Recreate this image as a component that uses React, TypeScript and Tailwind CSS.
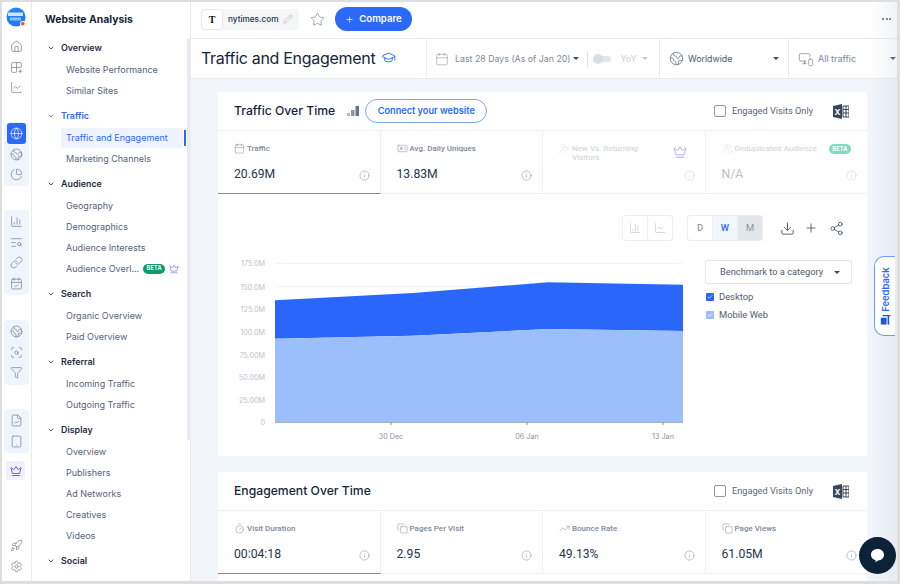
import React from "react";
import {
  House, Grid2x2Plus, ChartLine, Globe, Earth, ChartPie, ChartColumn, TextSearch, Link, CalendarCheck,
  ScanSearch, Funnel, FileChartLine, Tablet, Crown, Rocket, Settings, ChevronDown, Pencil, Star, Plus,
  GraduationCap, Calendar, Info, Share2, Users, UserPlus, Timer, Copy, TrendingUp, IdCard, Check, MonitorSmartphone,
  Download,
} from "lucide-react";

const F = "font-['Inter','Liberation_Sans',sans-serif]";
const R = "font-['Roboto','Liberation_Sans',sans-serif]";

function Rail({ children, className = "" }: { children: React.ReactNode; className?: string }) {
  return <div className={`mx-[2px] flex flex-col items-center rounded-[4px] bg-[#eff4fd] ${className}`}>{children}</div>;
}

function RailIcon({ I, active }: { I: React.ComponentType<any>; active?: boolean }) {
  return (
    <div className={`flex h-[20.7px] w-[19px] shrink-0 items-center justify-center rounded-[3px] ${active ? "bg-[#2b69fa] text-white" : "text-[#737e8e]"}`}>
      <I size={13} strokeWidth={1.3} />
    </div>
  );
}

function NavHead({ label, active }: { label: string; active?: boolean }) {
  return (
    <div className={`mt-1 flex h-[21px] items-center pl-[15px] text-[8.9px] font-semibold ${active ? "text-[#2b69fa]" : "text-[#1f2c40]"}`}>
      <ChevronDown size={8} strokeWidth={2.4} className="mr-[6px]" />
      {label}
    </div>
  );
}

function NavItem({ label, active, children }: { label: string; active?: boolean; children?: React.ReactNode }) {
  return (
    <div className={`flex h-[21px] items-center pl-[34px] text-[9px] ${active ? "text-[#2b69fa]" : "text-[#56637a]"}`}>
      {active ? (
        <div className="ml-[-5px] flex h-[20px] w-[122px] items-center rounded-[2px] bg-[#eef3fd] pl-[5px]">{label}</div>
      ) : (
        label
      )}
      {active && <div className="ml-[1px] h-[16px] w-[2px] bg-[#2b69fa]" />}
      {children}
    </div>
  );
}

function Section({ head, items, active }: { head: string; items: string[]; active?: string }) {
  return (
    <div>
      <NavHead label={head} active={!!active} />
      <div className="mt-[1px]">
        {items.map((i) => (
          <NavItem key={i} label={i} active={i === active} />
        ))}
      </div>
    </div>
  );
}

function Excel() {
  return (
    <svg width="16" height="15" viewBox="0 0 16 15" className="shrink-0">
      <path d="M0 2 9 0v15l-9-2z" fill="#38465a" />
      <path d="M10 2h6v11h-6z" fill="none" stroke="#38465a" strokeWidth="1" />
      <path d="M10 5.500h6M10 9h6M13 2v11" stroke="#38465a" strokeWidth="1" />
      <text x="4.400" y="10.600" fontSize="8" fontWeight="700" fill="#fff" textAnchor="middle" fontFamily="Inter">X</text>
    </svg>
  );
}

function Engaged() {
  return (
    <div className={`${R} flex items-center text-[9.2px] text-[#59657a]`}>
      <div className="mr-[6px] h-[12px] w-[12px] rounded-[2px] border border-[#8d97a6]" />
      Engaged Visits Only
      <div className="ml-[20px] mr-[18px]"><Excel /></div>
    </div>
  );
}

type TileProps = { I: React.ComponentType<any>; label: string; value?: string; active?: boolean; muted?: boolean; extra?: React.ReactNode; last?: boolean };

function Tile({ I, label, value, active, muted, extra, last }: TileProps) {
  return (
    <div className={`relative h-[63px] min-w-0 flex-1 pl-[16px] pt-[13px] ${last ? "" : "border-r border-[#eceff3]"} ${active ? "border-b-[1px] border-b-[#5f8ff0]" : ""}`}>
      <div className={`${R} flex items-start text-[8px] font-medium leading-[9.4px] ${muted ? "text-[#d5d9e0]" : "text-[#7e8898]"}`}>
        <I size={11} strokeWidth={1.1} className="mr-[2px] mt-[-1px] shrink-0" />
        <span className="whitespace-pre-line">{label}</span>
      </div>
      {value && (
        <div className={`${R} absolute left-[16px] top-[35px] text-[12.2px] leading-[16px] ${muted ? "text-[#b9bfc9]" : "text-[#27354a]"}`}>{value}</div>
      )}
      <Info size={11} strokeWidth={1.2} className={`absolute right-[10px] top-[38.500px] ${muted ? "text-[#ccd1d8]" : "text-[#8c95a3]"}`} />
      {extra}
    </div>
  );
}

function Pill({ faded }: { faded?: boolean }) {
  return (
    <span className={`inline-flex h-[10px] w-[22px] items-center justify-center rounded-full text-[5.5px] font-bold tracking-[0.3px] text-white ${faded ? "bg-[#7fdcc0]" : "bg-[#0d9d6d]"}`}>BETA</span>
  );
}

function Chart() {
  const ys: [string, number][] = [["175.0M", 263.5], ["150.0M", 287], ["125.0M", 309.5], ["100.0M", 332], ["75.00M", 355], ["50.00M", 377], ["25.00M", 400], ["0", 422.5]];
  const xs: [string, number][] = [["30 Dec", 391], ["06 Jan", 527], ["13 Jan", 663]];
  return (
    <svg width="470" height="190" viewBox="218 255 470 190" className="shrink-0" fontFamily="Inter">
      <path d="M275 263.300H683M275 286.700H683" stroke="#f1f3f6" strokeWidth="1" />
      <path d="M275 300.200 413 293 548 282.300 683 284.700V331L548 329 413 335.700 275 338.800Z" fill="#2b66fb" />
      <path d="M275 338.800 413 335.700 548 329 683 331V422.500H275Z" fill="#9cbefb" />
      <path d="M275 422.500H683" stroke="#a9b1bb" strokeWidth="1" />
      {xs.map(([t, x]) => (
        <g key={t}>
          <path d={`M${x} 422.500v2.500`} stroke="#7e8794" strokeWidth="1" />
          <text x={x} y="439" textAnchor="middle" fontSize="7.200" fill="#8b94a2">{t}</text>
        </g>
      ))}
      {ys.map(([t, y]) => (
        <text key={t} x="265" y={y + 2.7} textAnchor="end" fontSize="7.200" fill="#bcc3cd">{t}</text>
      ))}
    </svg>
  );
}

function Legend({ label, light }: { label: string; light?: boolean }) {
  return (
    <div className={`${R} flex h-[18px] items-center text-[9.4px] text-[#4f5c70]`}>
      <div className={`mr-[5px] flex h-[8px] w-[8px] items-center justify-center rounded-[1px] ${light ? "bg-[#9cbefb]" : "bg-[#2b66fb]"}`}>
        <Check size={6} strokeWidth={3} className="text-white" />
      </div>
      {label}
    </div>
  );
}

export default function App() {
  return (
    <div className={`${F} h-[584px] w-[900px] overflow-hidden bg-[#dedede] pb-[3px] pl-[2px] pr-[3px] pt-[2px]`}>
      <div className="relative flex h-[579px] w-[895px] overflow-hidden bg-white">
        {/* rail */}
        <div className="flex h-full w-[30px] shrink-0 flex-col border-r border-[#e8ebf0] pt-[5px]">
          <div className="ml-[4px] h-[19px] w-[19px]">
            <svg width="20" height="20" viewBox="0 0 20 20">
              <defs>
                <linearGradient id="lg" x1="0" y1="0" x2="1" y2="1"><stop offset="0" stopColor="#1f8ef1" /><stop offset="1" stopColor="#2b69fa" /></linearGradient>
              </defs>
              <circle cx="10" cy="10" r="9.500" fill="url(#lg)" />
              <rect x="2" y="5.500" width="15" height="3.500" fill="#cfe3fb" />
              <rect x="4" y="10.500" width="11" height="3" fill="#8ec0f7" />
              <circle cx="16.700" cy="16.700" r="2.400" fill="#e8622c" stroke="#fff" strokeWidth="1" />
            </svg>
          </div>
          <div className="mt-[10px] flex flex-col items-center">
            <RailIcon I={House} />
            <RailIcon I={Grid2x2Plus} />
            <RailIcon I={ChartLine} />
          </div>
          <Rail className="mt-[24px] h-[64px] pt-[1px]">
            <RailIcon I={Globe} active />
            <RailIcon I={Earth} />
            <RailIcon I={ChartPie} />
          </Rail>
          <Rail className="mt-[24px] h-[85px] pt-[1px]">
            <RailIcon I={ChartColumn} />
            <RailIcon I={TextSearch} />
            <RailIcon I={Link} />
            <RailIcon I={CalendarCheck} />
          </Rail>
          <Rail className="mt-[25px] h-[65px] pt-[1px]">
            <RailIcon I={Earth} />
            <RailIcon I={ScanSearch} />
            <RailIcon I={Funnel} />
          </Rail>
          <Rail className="mt-[24px] h-[44px] pt-[1px]">
            <RailIcon I={FileChartLine} />
            <RailIcon I={Tablet} />
          </Rail>
          <div className="ml-[4px] mt-[8px] flex h-[19px] w-[19px] items-center justify-center rounded-[3px] bg-[#f1effe] text-[#4a3fd0]">
            <Crown size={12} strokeWidth={1.6} />
          </div>
          <div className="mt-auto flex flex-col items-center pb-[4px]">
            <RailIcon I={Rocket} />
            <RailIcon I={Settings} />
          </div>
        </div>

        {/* nav */}
        <div className="relative h-full w-[159px] shrink-0 border-r border-[#e8ebf0]">
          <div className="flex h-[33px] items-center pl-[13px] pt-[2px] text-[10.4px] font-bold text-[#17243a]">Website Analysis</div>
          <div className="mt-[-2px]">
            <Section head="Overview" items={["Website Performance", "Similar Sites"]} />
            <Section head="Traffic" items={["Traffic and Engagement", "Marketing Channels"]} active="Traffic and Engagement" />
            <div>
              <NavHead label="Audience" />
              <div className="mt-[1px]">
                <NavItem label="Geography" />
                <NavItem label="Demographics" />
                <NavItem label="Audience Interests" />
                <NavItem label="Audience Overl...">
                  <span className="ml-[4px] flex items-center"><Pill /></span>
                  <Crown size={10} strokeWidth={1.3} className="ml-[4px] text-[#5b4fe0]" />
                </NavItem>
              </div>
            </div>
            <Section head="Search" items={["Organic Overview", "Paid Overview"]} />
            <Section head="Referral" items={["Incoming Traffic", "Outgoing Traffic"]} />
            <Section head="Display" items={["Overview", "Publishers", "Ad Networks", "Creatives", "Videos"]} />
            <Section head="Social" items={[]} />
          </div>
          <div className="absolute right-0 top-[37px] h-[401px] w-[3px] bg-[#e7eaef]" />
        </div>

        {/* main */}
        <div className="flex h-full min-w-0 flex-1 flex-col bg-[#f2f6fb]">
          <div className="flex h-[37px] shrink-0 items-center border-b border-[#e8ebf0] bg-white pb-[2px] pl-[10px] pr-[5px]">
            <div className="flex h-[21px] w-[98px] items-center rounded-[4px] bg-[#f5f6f8] text-[8.2px] font-medium text-[#27354a]">
              <div className="mr-[5px] flex h-[21px] w-[22px] items-center justify-center rounded-[4px] border border-[#e6e8ec] bg-white font-['Liberation_Serif',serif] text-[10px] font-bold text-[#111]">T</div>
              nytimes.com
              <Pencil size={10} strokeWidth={1.1} className="ml-[5px] text-[#9aa2ad]" />
            </div>
            <Star size={15} strokeWidth={1.1} className="ml-[11px] text-[#747f8e]" />
            <div className="ml-[10px] flex h-[24px] w-[77px] items-center justify-center rounded-full bg-[#2b69fa] text-[9.6px] font-semibold text-white">
              <Plus size={9} strokeWidth={2} className="mr-[5px]" />
              Compare
            </div>
            <div className="ml-auto mr-[1px] flex gap-[1.5px]">
              <span className="h-[2px] w-[2px] rounded-full bg-[#3d4a5c]" />
              <span className="h-[2px] w-[2px] rounded-full bg-[#3d4a5c]" />
              <span className="h-[2px] w-[2px] rounded-full bg-[#3d4a5c]" />
            </div>
          </div>

          <div className="flex h-[40px] shrink-0 border-b border-[#e8ebf0] bg-white text-[8.8px]">
            <div className="flex w-[236px] items-center border-r border-[#e8ebf0] pb-[2px] pl-[10px] text-[16px] font-normal tracking-[-0.3px] text-[#17243a]">
              Traffic and Engagement
              <GraduationCap size={15} strokeWidth={1.5} className="ml-[6px] text-[#2b69fa]" />
            </div>
            <div className="flex w-[233px] items-center border-r border-[#e8ebf0] pl-[8px] text-[#7d8796]">
              <Calendar size={14} strokeWidth={1.1} className="mr-[6px] text-[#939cab]" />
              Last 28 Days (As of Jan 20)
              <span className="ml-[2px] h-0 w-0 border-x-[3px] border-t-[3.5px] border-x-transparent border-t-[#3d4a5c]" />
              <span className="ml-[8px] h-[16px] w-px bg-[#dde1e7]" />
              <span className="relative ml-[5px] h-[6px] w-[18px] rounded-full bg-[#e3e6eb]">
                <span className="absolute left-0 top-[-2px] h-[10px] w-[10px] rounded-full bg-[#d8dce3]" />
              </span>
              <span className="ml-[10px] text-[#ccd1d9]">YoY</span>
              <span className="ml-[6px] h-0 w-0 border-x-[3px] border-t-[3.5px] border-x-transparent border-t-[#c3c8d0]" />
            </div>
            <div className="flex w-[129px] items-center border-r border-[#e8ebf0] pl-[9px] text-[#4c586b]">
              <Earth size={15} strokeWidth={1.5} className="mr-[4px] text-[#7d8796]" />
              Worldwide
              <span className="ml-auto mr-[9px] h-0 w-0 border-x-[3px] border-t-[3.5px] border-x-transparent border-t-[#3d4a5c]" />
            </div>
            <div className="flex min-w-0 flex-1 items-center pl-[9px] text-[9px] text-[#7d8796]">
              <MonitorSmartphone size={16} strokeWidth={1.1} className="mr-[4px]" />
              All traffic
              <span className="ml-auto mr-[1px] h-0 w-0 border-x-[3px] border-t-[3.5px] border-x-transparent border-t-[#3d4a5c]" />
            </div>
          </div>

          <div className="min-h-0 flex-1 overflow-hidden pl-[27px] pr-[30px] pt-[13px]">
            {/* card 1 */}
            <div className="h-[364px] bg-white">
              <div className="flex h-[39px] items-center border-b border-[#edf0f4] pl-[16px]">
                <span className="text-[12.2px] font-medium text-[#17243a]">Traffic Over Time</span>
                <svg width="12" height="10" viewBox="0 0 12 10" className="ml-[12px]">
                  <path d="M0 7h3v3H0z" fill="#b5bbc5" />
                  <path d="M4 4h3.500v6H4z" fill="#8f98a6" />
                  <path d="M8.500 0H12v10H8.500z" fill="#69758a" />
                </svg>
                <div className="ml-[6px] flex h-[24px] w-[122px] items-center justify-center rounded-full border border-[#7ca5f6] text-[9.2px] font-semibold text-[#2b69fa]">Connect your website</div>
                <div className="ml-auto"><Engaged /></div>
              </div>
              <div className="flex h-[63px] border-b border-[#edf0f4]">
                <Tile I={Calendar} label="Traffic" value="20.69M" active />
                <Tile I={IdCard} label="Avg. Daily Uniques" value="13.83M" />
                <Tile
                  I={UserPlus}
                  label={"New Vs. Returning\nVisitors"}
                  muted
                  extra={<Crown size={14} strokeWidth={1} className="absolute right-[18px] top-[14px] text-[#7f76ea]" />}
                />
                <Tile
                  I={Users}
                  label="Deduplicated Audience"
                  value="N/A"
                  muted
                  last
                  extra={<span className="absolute right-[16px] top-[13px] flex"><Pill faded /></span>}
                />
              </div>
              <div className="flex h-[61px] items-start justify-end pr-[23px] pt-[21px]">
                <div className="flex h-[26px] w-[51px] rounded-[3px] border border-[#eceff3] text-[#b6bdc8]">
                  <div className="flex flex-1 items-center justify-center border-r border-[#eceff3]"><ChartColumn size={12} strokeWidth={1.1} /></div>
                  <div className="flex flex-1 items-center justify-center"><ChartLine size={12} strokeWidth={1.1} /></div>
                </div>
                <div className={`${R} ml-[14px] flex h-[26px] w-[76px] overflow-hidden rounded-[3px] border border-[#eceff3] text-[9.4px]`}>
                  <div className="flex flex-1 items-center justify-center border-r border-[#eceff3] text-[#7d8796]">D</div>
                  <div className="flex flex-1 items-center justify-center border-r border-[#eceff3] bg-[#f2f6fd] font-medium text-[#2b69fa]">W</div>
                  <div className="flex flex-1 items-center justify-center bg-[#e2e5e9] text-[#8c95a3]">M</div>
                </div>
                <div className="ml-[17px] flex h-[26px] items-center text-[#3f4c5f]">
                  <Download size={15} strokeWidth={1.4} />
                  <Plus size={14} strokeWidth={1.4} className="ml-[9px]" />
                  <Share2 size={15} strokeWidth={1.3} className="ml-[11px]" />
                </div>
              </div>
              <div className="flex">
                <Chart />
                <div className="ml-[17px] pt-[5px]">
                  <div className={`${R} flex h-[24px] w-[147px] items-center rounded-[2px] border border-[#e4e7ec] pl-[14px] pr-[11px] text-[9.3px] text-[#4f5c70]`}>
                    Benchmark to a category
                    <span className="ml-auto h-0 w-0 border-x-[3px] border-t-[3.5px] border-x-transparent border-t-[#3d4a5c]" />
                  </div>
                  <div className="ml-[1px] mt-[4px]">
                    <Legend label="Desktop" />
                    <Legend label="Mobile Web" light />
                  </div>
                </div>
              </div>
            </div>

            {/* card 2 */}
            <div className="mt-[16px] h-[120px] bg-white">
              <div className="flex h-[39px] items-center border-b border-[#edf0f4] pl-[16px]">
                <span className="text-[12.2px] font-medium text-[#17243a]">Engagement Over Time</span>
                <div className="ml-auto"><Engaged /></div>
              </div>
              <div className="flex h-[63px] border-b border-[#edf0f4]">
                <Tile I={Timer} label="Visit Duration" value="00:04:18" active />
                <Tile I={Copy} label="Pages Per Visit" value="2.95" />
                <Tile I={TrendingUp} label="Bounce Rate" value="49.13%" />
                <Tile I={Copy} label="Page Views" value="61.05M" last />
              </div>
            </div>
          </div>
        </div>

        {/* overlays */}
        <div className="pointer-events-none absolute bottom-0 right-0 top-0 w-[28px] bg-linear-to-r from-transparent to-[#c8d0e0]/25" />
        <div className="absolute right-[2px] top-[254px] flex h-[80px] w-[21px] flex-col items-center justify-center rounded-l-[10px] border border-r-0 border-[#6f9bf3] bg-white pl-[2px]">
          <span className="flex rotate-[-90deg] items-center whitespace-nowrap text-[9.4px] font-semibold text-[#2b69fa]">
            <svg width="10" height="10" viewBox="0 0 10 10" className="mr-[3px] rotate-90"><path d="M0 3h6v7H0zM2 0h8v1.600H8.600V10H7V1.600H2z" fill="#1f55d8" /></svg>
            Feedback
          </span>
        </div>
        <div className="absolute bottom-[7px] right-[1px] flex h-[37px] w-[37px] items-center justify-center rounded-full bg-[#0b2239]">
          <svg width="15" height="15" viewBox="0 0 15 15"><path d="M7.500 1C11.400 1 14 3.500 14 6.700s-2.600 5.600-6 5.700l-2.600 1.900.2-2.200C2.800 11.500 1 9.400 1 6.700 1 3.500 3.600 1 7.500 1Z" fill="#fff" /></svg>
        </div>
      </div>
    </div>
  );
}
